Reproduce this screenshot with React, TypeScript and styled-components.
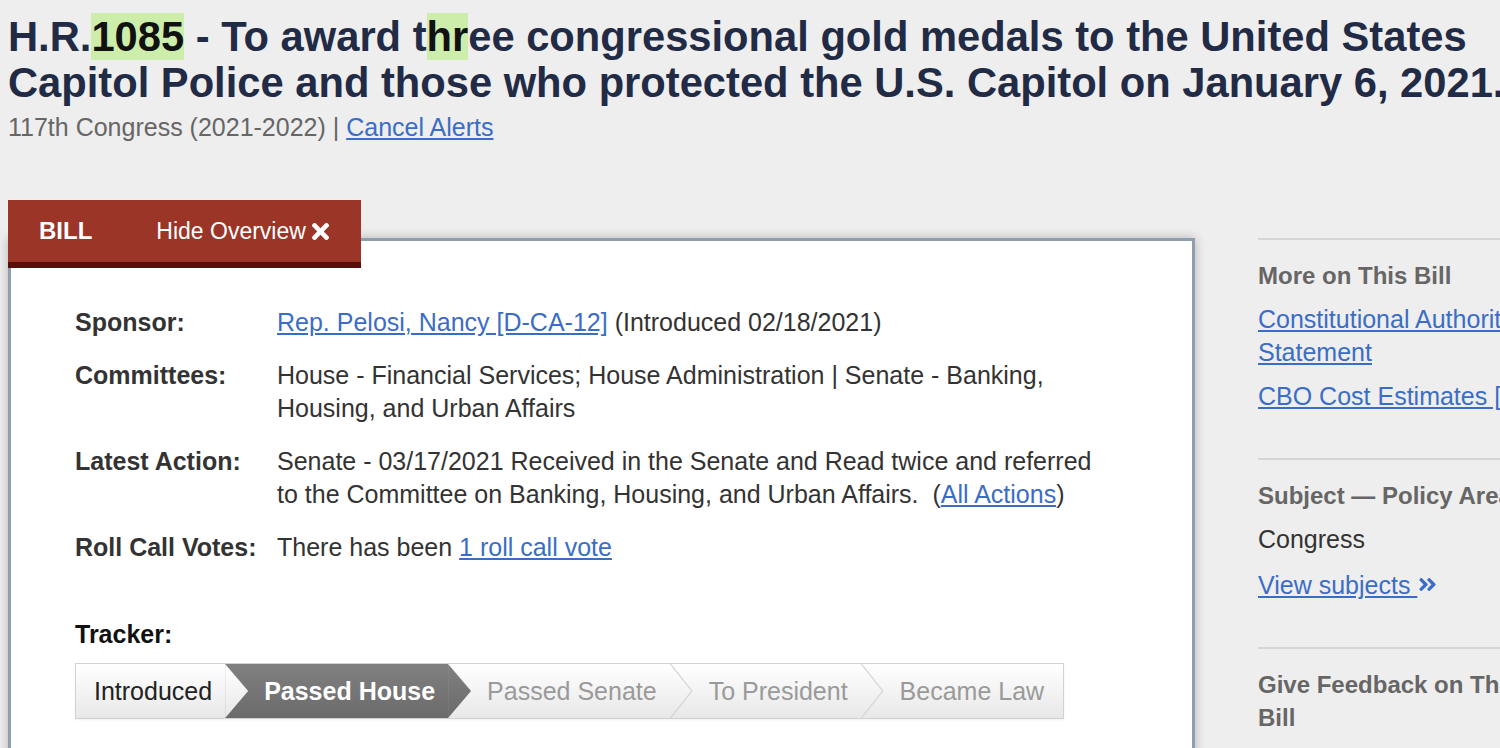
import React from "react";
import styled, { createGlobalStyle } from "styled-components";
import { FaTimes, FaAngleDoubleRight } from "react-icons/fa";

const GlobalStyle = createGlobalStyle`
  html, body {
    margin: 0;
    padding: 0;
    background: #eeeeee;
    overflow: hidden;
  }
  body {
    font-family: "Liberation Sans", Arial, sans-serif;
  }
  * { box-sizing: border-box; }
`;

const Page = styled.div`
  width: 1640px;
  padding: 14px 8px 0;
`;

const Title = styled.h1`
  margin: 0;
  width: 1580px;
  font-size: 41.7px;
  line-height: 46px;
  font-weight: 700;
  color: #222b45;
`;

const Hit = styled.span`
  background: #cdeeaa;
  color: #111;
`;

const Meta = styled.div`
  margin-top: 5px;
  font-size: 25px;
  line-height: 33px;
  color: #666;
`;

const Link = styled.a`
  color: #3a6dc6;
  text-decoration: underline;
  cursor: pointer;
`;

const Main = styled.div`
  display: flex;
  align-items: flex-start;
  gap: 63px;
  margin-top: 56px;
`;

const LeftCol = styled.div`
  width: 1187px;
  flex-shrink: 0;
  display: flex;
  flex-direction: column;
  align-items: flex-start;
`;

const Tab = styled.div`
  position: relative;
  z-index: 1;
  display: flex;
  align-items: center;
  height: 68px;
  padding: 0 28px 0 31px;
  background: #9a3527;
  border-bottom: 6px solid #5a0e0a;
  color: #fff;
  margin-bottom: -30px;
`;

const TabLabel = styled.span`
  font-size: 24px;
  font-weight: 700;
  margin-right: 64px;
`;

const TabAction = styled.span`
  display: flex;
  align-items: center;
  gap: 2px;
  font-size: 23px;
`;

const Card = styled.div`
  align-self: stretch;
  background: #fff;
  border: 3px solid #8e9eac;
  box-shadow: 0 0 10px rgba(0, 0, 0, 0.25);
  padding: 65px 80px 60px 64px;
`;

const Details = styled.div`
  display: grid;
  grid-template-columns: 202px 1fr;
  row-gap: 20px;
  font-size: 25px;
  line-height: 33px;
  color: #333;
`;

const Label = styled.div`
  font-weight: 700;
`;

const Value = styled.div`
  max-width: 830px;
`;

const TrackerLabel = styled.div`
  margin-top: 54px;
  font-size: 25px;
  line-height: 33px;
  font-weight: 700;
  color: #111;
`;

const TrackerBar = styled.div`
  display: inline-flex;
  height: 56px;
  margin-top: 12px;
  border: 1px solid #d2d2d2;
  background: linear-gradient(#ffffff, #e8e8e8);
  box-shadow: 0 1px 2px rgba(0, 0, 0, 0.06);
`;

type StepState = "done" | "current" | "future";

const Step = styled.div<{ $state: StepState; $first?: boolean; $last?: boolean }>`
  position: relative;
  display: flex;
  align-items: center;
  padding: 0 ${(p) => (p.$last ? 19 : 13)}px 0 ${(p) => (p.$first ? 18 : 39)}px;
  font-size: 25px;
  white-space: nowrap;
  font-weight: ${(p) => (p.$state === "current" ? 700 : 400)};
  color: ${(p) => (p.$state === "done" ? "#222" : p.$state === "current" ? "#fff" : "#9a9a9a")};
  background: ${(p) => (p.$state === "current" ? "linear-gradient(#808080, #6b6b6b)" : "transparent")};

  &::after {
    content: ${(p) => (p.$last ? "none" : "''")};
    position: absolute;
    top: 0;
    left: 100%;
    width: 23px;
    height: 100%;
    z-index: 2;
    background: ${(p) =>
      p.$state === "current"
        ? "linear-gradient(#808080, #6b6b6b)"
        : p.$state === "done"
        ? "linear-gradient(#ffffff, #e8e8e8)"
        : "#d4d4d4"};
    clip-path: ${(p) =>
      p.$state === "future"
        ? "polygon(0 0, 1.5px 0, 100% 50%, 1.5px 100%, 0 100%, calc(100% - 1.5px) 50%)"
        : "polygon(0 0, 100% 50%, 0 100%)"};
  }
`;

const Sidebar = styled.aside`
  width: 274px;
  flex-shrink: 0;
  margin-top: 38px;
`;

const Section = styled.section`
  border-top: 2px solid #d6d6d6;
  padding: 19px 0 45px;
`;

const SideHeading = styled.h2`
  margin: 0;
  font-size: 24px;
  line-height: 33px;
  font-weight: 700;
  color: #666;
`;

const SideItem = styled.div<{ $space?: number }>`
  margin-top: ${(p) => p.$space ?? 11}px;
  font-size: 25px;
  line-height: 33px;
  color: #333;
`;

const IconLink = styled.span`
  display: inline-flex;
  align-items: center;
  color: #3a6dc6;
  vertical-align: -1px;
`;

const steps: { name: string; state: StepState }[] = [
  { name: "Introduced", state: "done" },
  { name: "Passed House", state: "current" },
  { name: "Passed Senate", state: "future" },
  { name: "To President", state: "future" },
  { name: "Became Law", state: "future" },
];

export default function App() {
  return (
    <Page>
      <GlobalStyle />
      <Title>
        H.R.<Hit>1085</Hit> - To award t<Hit>hr</Hit>ee congressional gold medals to the United States
        Capitol Police and those who protected the U.S. Capitol on January 6, 2021.
      </Title>
      <Meta>
        117th Congress (2021-2022) | <Link>Cancel Alerts</Link>
      </Meta>

      <Main>
        <LeftCol>
          <Tab>
            <TabLabel>BILL</TabLabel>
            <TabAction>
              <span>Hide Overview</span>
              <FaTimes size={25} />
            </TabAction>
          </Tab>
          <Card>
            <Details>
              <Label>Sponsor:</Label>
              <Value>
                <Link>Rep. Pelosi, Nancy [D-CA-12]</Link> (Introduced 02/18/2021)
              </Value>
              <Label>Committees:</Label>
              <Value>
                House - Financial Services; House Administration | Senate - Banking, Housing, and Urban Affairs
              </Value>
              <Label>Latest Action:</Label>
              <Value>
                Senate - 03/17/2021 Received in the Senate and Read twice and referred to the Committee on
                Banking, Housing, and Urban Affairs.&nbsp; (<Link>All Actions</Link>)
              </Value>
              <Label>Roll Call Votes:</Label>
              <Value>
                There has been <Link>1 roll call vote</Link>
              </Value>
            </Details>
            <TrackerLabel>Tracker:</TrackerLabel>
            <TrackerBar>
              {steps.map((s, i) => (
                <Step key={s.name} $state={s.state} $first={i === 0} $last={i === steps.length - 1}>
                  {s.name}
                </Step>
              ))}
            </TrackerBar>
          </Card>
        </LeftCol>

        <Sidebar>
          <Section>
            <SideHeading>More on This Bill</SideHeading>
            <SideItem>
              <Link>Constitutional Authority Statement</Link>
            </SideItem>
            <SideItem>
              <Link>CBO Cost Estimates [1]</Link>
            </SideItem>
          </Section>
          <Section>
            <SideHeading>Subject — Policy Area:</SideHeading>
            <SideItem>Congress</SideItem>
            <SideItem $space={13}>
              <Link>View subjects </Link>
              <IconLink>
                <FaAngleDoubleRight size={21} />
              </IconLink>
            </SideItem>
          </Section>
          <Section>
            <SideHeading>Give Feedback on This Bill</SideHeading>
          </Section>
        </Sidebar>
      </Main>
    </Page>
  );
}
